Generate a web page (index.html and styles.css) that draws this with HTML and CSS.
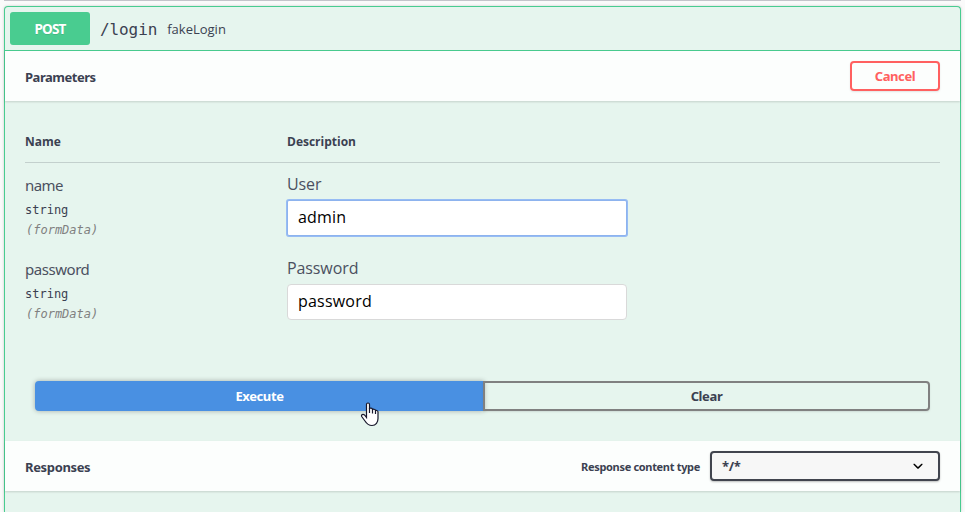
FILE: index.html
```html
<!DOCTYPE html>
<html lang="en">
<head>
<meta charset="utf-8">
<title>POST /login</title>
<link rel="stylesheet" href="styles.css">
</head>
<body>
<main class="operation">
  <div class="summary">
    <span class="method">POST</span>
    <span class="path">/login</span>
    <span class="description">fakeLogin</span>
  </div>
  <div class="section-header">
    <h4 class="parameters-title">Parameters</h4>
    <button class="btn cancel"><span>Cancel</span></button>
  </div>
  <div class="parameters">
    <div class="row head"><span>Name</span><span>Description</span></div>
    <div class="row">
      <div class="info">
        <div class="param-name short">name</div>
        <div class="type">string</div>
        <div class="location">(formData)</div>
      </div>
      <div class="field"><label for="user">User</label><input id="user" class="focused" value="admin"></div>
    </div>
    <div class="row">
      <div class="info">
        <div class="param-name">password</div>
        <div class="type">string</div>
        <div class="location">(formData)</div>
      </div>
      <div class="field"><label for="pass">Password</label><input id="pass" value="password"></div>
    </div>
  </div>
  <div class="actions">
    <button class="btn execute"><span>Execute</span></button>
    <button class="btn clear"><span>Clear</span></button>
  </div>
  <div class="section-header responses">
    <h4 class="responses-title">Responses</h4>
    <span class="content-label">Response content type</span>
    <div class="select"><span>*/*</span>
      <svg width="20" height="20" viewBox="0 0 20 20"><path d="M13.418 7.859c.271-.268.709-.268.978 0 .27.268.272.701 0 .969l-3.908 3.83c-.27.268-.707.268-.979 0l-3.908-3.83c-.27-.267-.27-.701 0-.969.271-.268.709-.268.978 0L10 11z"/></svg>
    </div>
  </div>
</main>
<svg class="cursor" width="20" height="26" viewBox="0 0 20 26"><path d="M6.500 15.500V2.500C6.500.5 9.500.5 9.500 2.500V7C9.500 5.700 12.500 5.800 12.500 7.500V8C12.500 6.800 15.500 7 15.500 8.500V9C15.500 8 18 8.300 18 10V16.500C18 20 16 23.500 12 23.500C8 23.500 6.500 21.500 5 19L1.700 14.500C.8 12.800 3 11.700 4.500 13Z" fill="#fff" stroke="#17172b" stroke-width="1.2"/><path d="M9.500 6v5M12.500 7.500v4M15.500 8.500v3.500" fill="none" stroke="#17172b" stroke-width="1.2"/></svg>
</body>
</html>
```
FILE: styles.css
```css
* { box-sizing: border-box; }
body {
  margin: 0;
  padding: 0 4px;
  height: 512px;
  overflow: hidden;
  background: #fafafa;
  color: #3b4151;
  font-family: "Open Sans", sans-serif;
}
body::before { content: ""; display: block; height: 1px; margin-bottom: 5px; background: #c4c4ca; }
.operation {
  width: 957px;
  height: 506px;
  border: 1px solid #49cc90;
  border-bottom: 0;
  border-radius: 4px 4px 0 0;
  background: #e6f5ee;
  box-shadow: 0 0 3px rgba(0, 0, 0, .19);
}
.summary { display: flex; align-items: center; height: 44px; padding: 0 5px; border-bottom: 1px solid #49cc90; }
.method {
  width: 80px; height: 33px;
  border-radius: 3px; background: #49cc90; color: #fff;
  font: 700 13.5px/34px "Noto Sans", sans-serif; letter-spacing: -.8px; text-align: center;
  text-shadow: 0 1px 0 rgba(0, 0, 0, .1);
}
.path { margin: 2px 0 0 10px; font: 16px/24px "DejaVu Sans Mono", monospace; letter-spacing: -.1px; }
.description { margin-left: 10px; font-size: 13px; line-height: 20px; }
.section-header {
  display: flex; align-items: center; height: 50px; padding: 0 20px;
  background: rgba(255, 255, 255, .85);
  box-shadow: 0 1px 2px rgba(0, 0, 0, .15);
}
h4 { flex: 1; margin: 2px 0 0; font: 700 13px/20px "Noto Sans", sans-serif; }
.parameters-title { letter-spacing: -.47px; }
.responses-title { letter-spacing: -.35px; }
.btn {
  height: 30px; padding: 0 0 1px;
  border: 2px solid #808080; border-radius: 4px;
  background: transparent; color: #3b4151;
  box-shadow: 0 1px 2px rgba(0, 0, 0, .1);
  font: 700 13px/20px "Noto Sans", sans-serif; letter-spacing: -.38px;
}
.cancel { width: 90px; border-color: #ff6060; color: #ff6060; }
.parameters { padding: 20px 20px 0; }
.row { display: grid; grid-template-columns: 262px 340px; height: 84px; }
.head {
  height: 42px; padding-top: 11px; border-bottom: 1px solid #c3d0cd;
  font: 700 12px/20px "Open Sans", sans-serif;
}
.info { padding-top: 13px; }
.param-name { height: 24px; font: 400 15px/19px "Noto Sans", sans-serif; letter-spacing: -.45px; color: #4b5060; }
.short { letter-spacing: -.6px; }
.type { height: 20px; font: 12px/20px "DejaVu Sans Mono", monospace; }
.location { padding-left: 1px; color: #808080; font: italic 12px/20px "DejaVu Sans Mono", monospace; }
.field { padding-top: 10px; }
label { display: block; height: 27px; font-size: 16px; font-weight: 400; line-height: 23px; letter-spacing: -.1px; color: #4b5060; }
input {
  display: block; width: 340px; height: 36px; padding: 0 10px 2px;
  border: 1px solid #d9d9d9; border-radius: 4px; outline: none;
  background: #fff; color: #000; font: 400 16px/24px "Open Sans", sans-serif; letter-spacing: .2px;
}
.focused { border-color: #8db3ee; box-shadow: 0 0 0 1px #97bcf4; border-radius: 2px; }
.actions { display: flex; margin: 50px 30px 30px; }
.execute {
  width: 449px; border-color: #4990e2; border-radius: 4px 0 0 4px;
  background: #4990e2; color: #fff; box-shadow: 0 0 5px rgba(0, 0, 0, .3);
}
.clear { flex: 1; margin-left: -1px; border-radius: 0 4px 4px 0; }
.content-label { margin: 1px 10px 0 0; font: 700 11px/20px "Noto Sans", sans-serif; letter-spacing: -.32px; }
.select {
  display: flex; align-items: center; justify-content: space-between;
  width: 230px; height: 30px; padding: 0 10px;
  border: 2px solid #41444e; border-radius: 4px; background: #f7f7f7;
  box-shadow: 0 1px 2px rgba(0, 0, 0, .25);
  font: 700 13px/20px "Noto Sans", sans-serif; letter-spacing: -.3px;
}
.cursor { position: absolute; left: 360px; top: 402px; }
```
